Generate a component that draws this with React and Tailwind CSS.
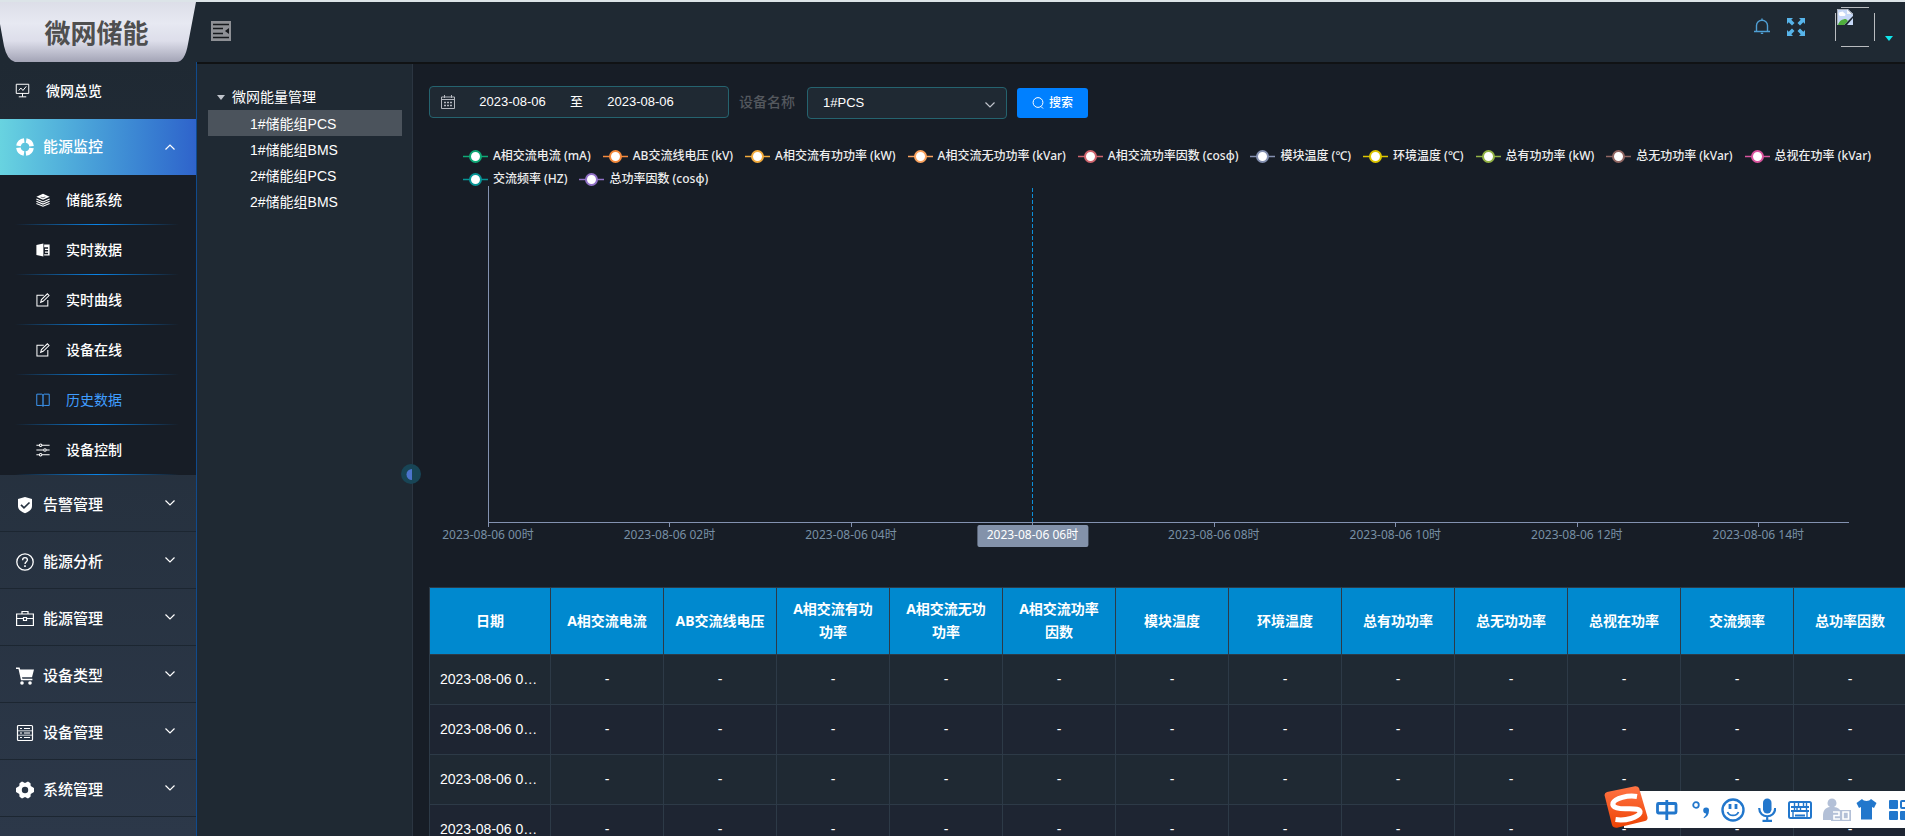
import React, { useState } from "react";

const subMenus = [
  { name: "储能系统", icon: "stack" },
  { name: "实时数据", icon: "book" },
  { name: "实时曲线", icon: "edit" },
  { name: "设备在线", icon: "edit" },
  { name: "历史数据", icon: "reading" },
  { name: "设备控制", icon: "operation" },
];

const menus = [
  { name: "告警管理", icon: "shield" },
  { name: "能源分析", icon: "question" },
  { name: "能源管理", icon: "suitcase" },
  { name: "设备类型", icon: "cart" },
  { name: "设备管理", icon: "server" },
  { name: "系统管理", icon: "gear" },
];

const devices = ["1#储能组PCS", "1#储能组BMS", "2#储能组PCS", "2#储能组BMS"];

const legends = [
  { name: "A相交流电流 (mA)", color: "#0fa876" },
  { name: "AB交流线电压 (kV)", color: "#f58a3c" },
  { name: "A相交流有功功率 (kW)", color: "#f3ab3d" },
  { name: "A相交流无功功率 (kVar)", color: "#fba35f" },
  { name: "A相交流功率因数 (cosφ)", color: "#d0656e" },
  { name: "模块温度 (℃)", color: "#8490b0" },
  { name: "环境温度 (℃)", color: "#dcc500" },
  { name: "总有功功率 (kW)", color: "#93b245" },
  { name: "总无功功率 (kVar)", color: "#916763" },
  { name: "总视在功率 (kVar)", color: "#d9559e" },
  { name: "交流频率 (HZ)", color: "#079496" },
  { name: "总功率因数 (cosφ)", color: "#9171c7" },
];

const hours = ["00", "02", "04", "06", "08", "10", "12", "14"];

const columns = [
  "A相交流电流",
  "AB交流线电压",
  "A相交流有功功率",
  "A相交流无功功率",
  "A相交流功率因数",
  "模块温度",
  "环境温度",
  "总有功功率",
  "总无功功率",
  "总视在功率",
  "交流频率",
  "总功率因数",
];

const rows = ["00时", "01时", "02时", "03时"];

const icons = {
  board: (
    <g fill="none" stroke="currentColor" strokeWidth="1.2">
      <path d="M1.5 1.5h15v11h-15zM9 12.5v4M4.5 16.6h9M4.5 9l2.500-3 2.500 3L13.500 4" />
    </g>
  ),
  help: (
    <g fill="none" stroke="currentColor" strokeWidth="4.6">
      <circle cx="9" cy="9" r="6.600" strokeDasharray="8.370 2" strokeDashoffset="-1" />
    </g>
  ),
  stack: (
    <g fill="none" stroke="currentColor" strokeWidth="1.4">
      <path d="M9 1l8.500 3.800L9 8.600 0.500 4.800z" fill="currentColor" stroke="none" />
      <path d="M0.500 7.800L9 11.500l8.500-3.700M0.500 10.600L9 14.200l8.500-3.600M0.500 13.400L9 17l8.500-3.600" />
      <path d="M6 5.200l3 1 3-1.200" stroke="#171d26" strokeWidth="0.8" />
    </g>
  ),
  book: (
    <g fill="currentColor">
      <path d="M0.500 2.500l9-2v17l-9-2z" />
      <path d="M10.500 2h7v14h-7v-1.500h5v-2h-4v-1.500h4V9h-4V7.500h4v-2h-5z" />
    </g>
  ),
  edit: (
    <g fill="none" stroke="currentColor" strokeWidth="1.3">
      <path d="M10 3H1.200v13.800h14V9" />
      <path d="M6 12l1-3.500L14.600 1l2.200 2.200-7.600 7.500z" />
    </g>
  ),
  reading: (
    <g fill="none" stroke="currentColor" strokeWidth="1.2">
      <path d="M1 1.500h6.500L9 2.800l1.500-1.300H17v14.500h-6.500L9 17l-1.500-1H1z" />
      <path d="M9 2.500V17" strokeWidth="2.600" strokeOpacity="0.600" />
    </g>
  ),
  operation: (
    <g fill="none" stroke="currentColor" strokeWidth="1.300">
      <path d="M0.500 3h4M7.500 3h10M0.500 9h9.500M13 9h4.500M0.500 15h4M7.500 15h10" />
      <circle cx="6" cy="3" r="1.600" />
      <circle cx="11.500" cy="9" r="1.600" />
      <circle cx="6" cy="15" r="1.600" />
    </g>
  ),
  shield: (
    <g>
      <path d="M9 1l7 2v7c0 3.500-3 5.700-7 7.200C5 15.700 2 13.500 2 10V3z" fill="currentColor" />
      <path d="M5 8.800l3 3 5.500-5.300" fill="none" stroke="#263240" strokeWidth="1.700" />
    </g>
  ),
  question: (
    <g fill="none" stroke="currentColor" strokeWidth="1.300">
      <circle cx="9" cy="9" r="8.200" />
      <path d="M6.600 7.200c0-1.500 1-2.500 2.400-2.500s2.400 1 2.400 2.300c0 1.700-2.400 1.800-2.400 4" />
      <path d="M9 12.300v1.600" strokeWidth="1.600" />
    </g>
  ),
  suitcase: (
    <g fill="none" stroke="currentColor" strokeWidth="1.200">
      <path d="M0.600 4h16.800v11.500H0.600zM6 4V1.500h6V4M0.600 8.500h7M10.500 8.500h7M7.500 7.500h3v3h-3z" />
    </g>
  ),
  cart: (
    <g fill="currentColor">
      <path d="M0 0.500h3.600l0.600 2H18l-2 7.800H6l0.400 1.500h10v1.500H5L2.500 2H0z" />
      <circle cx="6" cy="16" r="1.800" />
      <circle cx="14" cy="16" r="1.800" />
    </g>
  ),
  server: (
    <g fill="none" stroke="currentColor" strokeWidth="1.200">
      <rect x="1.500" y="1.500" width="15" height="15" rx="1" />
      <path d="M4 4.500h2M8 4.500h6M4 13.500h2M8 13.500h6" strokeWidth="1.200" />
      <path d="M2 6.800h14M2 11.200h14" strokeWidth="0.800" />
      <path d="M4 9h2M8 9h6" strokeWidth="1.400" strokeOpacity="0.700" />
    </g>
  ),
  gear: (
    <g>
      <path
        d="M6 0.500L9 2l3-1.500 2.500 1.700.2 2.800L18 7v4l-3.300 2-.2 2.800L12 17.500 9 16l-3 1.500-2.500-1.700L3.300 13 0 11V7l3.300-2 .2-2.800z"
        fill="currentColor"
      />
      <circle cx="9" cy="9" r="3.200" fill="#2a3645" />
    </g>
  ),
};

const Icon = ({ name, className }) => (
  <svg viewBox="0 0 18 18" className={className} aria-hidden="true">
    {icons[name]}
  </svg>
);

const Chevron = ({ up }) => (
  <svg viewBox="0 0 12 8" className="h-2 w-3" fill="none" stroke="currentColor" strokeWidth="1.200" aria-hidden="true">
    <path d={up ? "M1.500 6.500L6 2l4.500 4.500" : "M1.500 1.500L6 6l4.500-4.500"} />
  </svg>
);

const Sidebar = () => (
  <aside className="flex w-[197px] shrink-0 flex-col">
    <div className="relative flex h-[60px] shrink-0 items-center justify-center bg-[#1f2933] pr-2">
      <svg viewBox="0 0 196 60" preserveAspectRatio="none" className="absolute inset-y-0 left-0 h-full w-[196px]" aria-hidden="true">
        <defs>
          <linearGradient id="logoBg" x1="0" y1="0" x2="0" y2="1">
            <stop offset="0" stopColor="#dcdee8" />
            <stop offset="0.35" stopColor="#e7e9f2" />
            <stop offset="0.65" stopColor="#dddeea" />
            <stop offset="1" stopColor="#a3a4b6" />
          </linearGradient>
        </defs>
        <path d="M0 0H196L188 42Q185 60 176 60H15Q7 58 4 44L0 22Z" fill="url(#logoBg)" />
      </svg>
      <h1 className="relative mt-1 ml-1 text-[26px] leading-8 font-bold text-[#4f4f4f]">微网储能</h1>
    </div>
    <nav className="flex-1 border-r border-[#104a8c] bg-linear-to-b from-[#1f2933] to-[#2c3849] text-white">
      <a href="#overview" className="flex h-[57px] items-center gap-4 pl-[15px] text-sm font-medium">
        <Icon name="board" className="h-[15px] w-[15px]" />
        微网总览
      </a>
      <button type="button" className="flex h-14 w-full items-center bg-linear-to-r from-[#68d3e0] to-[#2f63cb] pr-5 pl-4 text-[15px] font-medium">
        <Icon name="help" className="h-[18px] w-[18px]" />
        <span className="ml-[9px] flex-1 text-left">能源监控</span>
        <Chevron up />
      </button>
      <ul className="bg-[#171d26]">
        {subMenus.map((item) => (
          <li key={item.name}>
            <a
              href={"#" + item.name}
              className={
                item.name === "历史数据"
                  ? "flex h-[49px] items-center gap-4 pl-9 text-sm text-[#409eff]"
                  : "flex h-[49px] items-center gap-4 pl-9 text-sm font-medium"
              }
            >
              <Icon name={item.icon} className="h-[14px] w-[14px]" />
              {item.name}
            </a>
            <div className="mr-[17px] ml-[15px] h-px bg-linear-to-r from-transparent via-[#0a84e8] to-transparent" />
          </li>
        ))}
      </ul>
      {menus.map((item) => (
        <button
          key={item.name}
          type="button"
          className="flex h-[57px] w-full items-center border-b border-[#1c2631] pt-1 pr-5 pl-4 text-[15px] font-medium"
        >
          <Icon name={item.icon} className="h-[18px] w-[18px]" />
          <span className="ml-[9px] flex-1 text-left">{item.name}</span>
          <span className="pb-1">
            <Chevron />
          </span>
        </button>
      ))}
    </nav>
  </aside>
);

const Header = () => (
  <header className="flex h-[62px] shrink-0 items-start justify-between border-b-2 border-[#101214] bg-[#1f2933] pl-[14px]">
    <button type="button" aria-label="收起菜单" className="mt-[19px]">
      <svg viewBox="0 0 20 20" className="h-5 w-5">
        <rect width="20" height="20" fill="#8e9095" />
        <path d="M2 3.500h16M2 7.500h10M2 12.500h10M2 16.500h16" stroke="#16191d" strokeWidth="1.300" />
        <path d="M18 7v6l-4-3z" fill="#16191d" />
      </svg>
    </button>
    <div className="flex items-start pr-3">
      <button type="button" aria-label="通知" className="mt-4 text-[#4f9fd4]">
        <svg viewBox="0 0 16 18" className="h-[18px] w-4" fill="none" stroke="currentColor" strokeWidth="1.400">
          <path d="M0 13.500h16M2.500 13.500V7.500C2.500 4.500 5 2.200 8 2.200s5.500 2.300 5.500 5.300v6M8 0.500v1.700M6.800 15.400h2.400" />
        </svg>
      </button>
      <button type="button" aria-label="全屏" className="mt-4 ml-[17px] text-[#57b4ea]">
        <svg viewBox="0 0 18 18" className="h-[18px] w-[18px]" fill="currentColor">
          <path d="M0 0h6L4.300 1.700 7.500 5 5 7.500 1.700 4.300 0 6z" />
          <path d="M18 0v6l-1.700-1.700L13 7.500 10.500 5l3.200-3.300L12 0z" />
          <path d="M0 18v-6l1.700 1.700L5 10.500 7.500 13l-3.200 3.300L6 18z" />
          <path d="M18 18h-6l1.700-1.700L10.500 13l2.500-2.500 3.300 3.200L18 12z" />
        </svg>
      </button>
      {/* avatar without a picture */}
      <svg viewBox="0 0 40 40" className="mt-[5px] ml-[30px] h-10 w-10" role="img" aria-label="头像">
        <path d="M6 0.500h28M6 39.500h28M0.500 6v28M39.500 6v28" stroke="#b9bcc0" />
        <path d="M2 2h11l5 5v2L9 18H2z" fill="#c6d8f7" />
        <path d="M12 2l6 5h-6z" fill="#f4f6fa" />
        <path d="M4 8a2 2 0 012-3 2 2 0 013 1 1.500 1.500 0 010 3H5z" fill="#fff" />
        <path d="M3 18c1-4 4-6 8-6l2 2-4 4z" fill="#4fae3c" />
        <path d="M2.500 18V2.500h10l5 5" fill="none" stroke="#aab0bb" />
        <path d="M18 11v7h-6z" fill="#c6d8f7" />
      </svg>
      <svg viewBox="0 0 8 5" className="mt-[34px] ml-[10px] h-[5px] w-2" aria-hidden="true">
        <path d="M0 0h8L4 5z" fill="#0fe6ec" />
      </svg>
    </div>
  </header>
);

const DeviceTree = () => {
  const [current, setCurrent] = useState(devices[0]);

  return (
    <section className="relative w-[216px] shrink-0 border-r border-[#2b3541] bg-[#1f2933] pt-5 pr-[10px] pl-[11px] text-sm text-white">
      <button type="button" className="flex h-[26px] w-full items-center gap-[7px] pl-[9px]">
        <svg viewBox="0 0 8 5" className="h-[5px] w-2" aria-hidden="true">
          <path d="M0 0h8L4 5z" fill="#c0c4cc" />
        </svg>
        微网能量管理
      </button>
      <ul>
        {devices.map((item) => (
          <li key={item}>
            <button
              type="button"
              onClick={() => setCurrent(item)}
              className={
                current === item
                  ? "flex h-[26px] w-full items-center bg-[#4b535c] pt-[2px] pl-[42px]"
                  : "flex h-[26px] w-full items-center pt-[2px] pl-[42px]"
              }
            >
              {item}
            </button>
          </li>
        ))}
      </ul>
      <button type="button" aria-label="折叠" className="absolute top-[400px] -right-[9px] z-10 flex h-5 w-5 items-center justify-center rounded-full bg-[#184556]">
        <svg viewBox="0 0 6 11" className="mr-1 h-[11px] w-[6px]">
          <path d="M6 0v11A5.500 5.500 0 016 0z" fill="#4c74cc" />
        </svg>
      </button>
    </section>
  );
};

const SearchBar = () => (
  <form className="flex h-[33px] items-start text-[13px] text-white" onSubmit={(e) => e.preventDefault()}>
    <div className="flex h-8 w-[300px] items-center rounded border border-[#25636f] bg-[#1f2933] pl-[11px]">
      <svg viewBox="0 0 14 14" className="h-[14px] w-[14px]" fill="none" stroke="#b4b8bf" aria-hidden="true">
        <path d="M0.500 2h13v11.500H0.500zM0.500 4.500h13M3.500 0v3M10.500 0v3" />
        <path d="M3 7.500h2M6 7.500h2M9 7.500h2M3 10.500h2M6 10.500h2M9 10.500h2" strokeWidth="1.400" />
      </svg>
      <input aria-label="开始日期" defaultValue="2023-08-06" className="w-[115px] bg-transparent text-center outline-none" />
      <span className="w-[13px] text-center">至</span>
      <input aria-label="结束日期" defaultValue="2023-08-06" className="w-[115px] bg-transparent text-center outline-none" />
    </div>
    <label htmlFor="device" className="mr-3 ml-[10px] text-sm leading-8 font-medium text-[#54585e]">
      设备名称
    </label>
    <div className="relative mt-px w-[200px]">
      <select id="device" className="h-8 w-full appearance-none rounded border border-[#25636f] bg-[#1f2933] pl-[15px] outline-none">
        <option>1#PCS</option>
        <option>2#PCS</option>
      </select>
      <span className="pointer-events-none absolute top-[14px] right-[11px] text-[#c0c4cc]">
        <Chevron />
      </span>
    </div>
    <button type="submit" className="mt-[2px] ml-[10px] flex h-[30px] items-center gap-[5px] rounded-[3px] bg-[#0080ff] px-[15px] text-xs font-medium">
      <svg viewBox="0 0 12 12" className="h-3 w-3" fill="none" stroke="currentColor" aria-hidden="true">
        <circle cx="6" cy="5.500" r="4.900" />
        <path d="M9 9.500l2 2" />
      </svg>
      搜索
    </button>
  </form>
);

const HistoryChart = () => (
  <div className="mt-[30px]">
    <ul className="ml-[34px] flex flex-wrap gap-x-3 gap-y-[9px] font-['Noto_Sans','Noto_Sans_CJK_SC',sans-serif] text-xs leading-[14px] font-medium text-[#eeeeee]">
      {legends.map((item) => (
        <li key={item.name} className="flex items-center gap-[5px] whitespace-nowrap">
          <svg viewBox="0 0 25 14" className="h-[14px] w-[25px]" aria-hidden="true">
            <path d="M0 7.500h25" stroke={item.color} strokeWidth="1.500" />
            <circle cx="12.500" cy="7.500" r="5.500" fill="#fff" stroke={item.color} strokeWidth="2" />
          </svg>
          {item.name}
        </li>
      ))}
    </ul>
    <div className="mr-14 ml-[59px]">
      <svg className="h-[360px] w-full overflow-visible font-['Noto_Sans','Noto_Sans_CJK_SC',sans-serif] text-xs">
        <g stroke="#8392b0" shapeRendering="crispEdges">
          <line x1="0.5" x2="0.5" y1="0" y2="341" />
          <line x1="0" x2="100%" y1="336.5" y2="336.5" />
        </g>
        {hours.map((hour, i) => (
          <svg key={hour} x={`${(i * 100) / 7.5}%`} className="overflow-visible">
            <line x1="0.5" x2="0.5" y1="337" y2="341" stroke="#8392b0" shapeRendering="crispEdges" />
            {hour === "06" && (
              <>
                <line x1="0.5" x2="0.5" y1="2" y2="336" stroke="#0d8fd8" strokeDasharray="4 2" shapeRendering="crispEdges" />
                <rect x="-55" y="339" width="111" height="22" rx="2" fill="#8392aa" />
              </>
            )}
            <text x="0" y="353" textAnchor="middle" fill={hour === "06" ? "#ffffff" : "#7890a5"}>
              2023-08-06 {hour}时
            </text>
          </svg>
        ))}
      </svg>
    </div>
  </div>
);

const HistoryTable = () => (
  <div className="mt-[41px] overflow-hidden">
    <table className="w-[1478px] table-fixed border-collapse text-sm text-white">
      <thead>
        <tr className="h-[67px] bg-[#0089cf] font-['Noto_Sans','Noto_Sans_CJK_SC',sans-serif] leading-[23px]">
          <th className="w-[121px] border border-[#2d3a47] px-[10px] pb-[2px] font-bold">日期</th>
          {columns.map((col) => (
            <th key={col} className="w-[113px] border border-[#2d3a47] px-[10px] pb-[2px] font-bold">
              {col}
            </th>
          ))}
        </tr>
      </thead>
      <tbody>
        {rows.map((time) => (
          <tr key={time} className="h-[50px] odd:bg-[#1f2933] even:bg-[#1e2532]">
            <td className="truncate border border-[#2d3a47] px-[10px] pb-[2px]">2023-08-06 {time}</td>
            {columns.map((col) => (
              <td key={col} className="border border-[#2d3a47] pb-[2px] text-center">
                -
              </td>
            ))}
          </tr>
        ))}
      </tbody>
    </table>
  </div>
);

// floating bar of the input method
const ImeBar = () => (
  <div className="absolute right-0 bottom-2 flex h-[41px] items-end">
    <svg viewBox="0 0 44 42" className="relative z-10 -mr-11 h-[42px] w-11" role="img" aria-label="输入法">
      <defs>
        <linearGradient id="imeLogo" x1="0" y1="0" x2="0" y2="1">
          <stop offset="0" stopColor="#ff7444" />
          <stop offset="1" stopColor="#ee4304" />
        </linearGradient>
      </defs>
      <path d="M3 6L31 0.300Q34 0 35 2L43.500 31Q44 34 41 35L13 41.700Q9 42 8 39L0.500 9Q0.500 7 3 6z" fill="url(#imeLogo)" />
      <path d="M33 10.500C24 9 11 12 9 17c-1.500 5 7 6 14 5.800 8-.2 14 .2 13 4C34 31.500 22 35 11.500 33.500" fill="none" stroke="#fff" strokeWidth="5" />
    </svg>
    <div className="ml-5 flex h-[37px] items-center bg-white pl-8 text-[#2277cc]">
      <svg viewBox="0 0 22 22" className="h-[22px] w-[22px]" fill="none" stroke="currentColor" strokeWidth="2.800">
        <rect x="1.500" y="4.500" width="18.500" height="9.500" rx="1" />
        <path d="M10.800 1v20" />
      </svg>
      <svg viewBox="0 0 18 18" className="ml-[14px] h-[18px] w-[18px]" fill="none" stroke="currentColor" strokeWidth="1.800">
        <circle cx="4" cy="4" r="2.800" />
        <path d="M14.300 6.500a2.800 2.800 0 012.700 3c0 4-2 6.500-5 7.800l-.4-1c1.500-1 2.400-2 2.500-3.700-1.700 0-2.900-1.200-2.900-3a3 3 0 013.100-3.100z" fill="currentColor" stroke="none" />
      </svg>
      <svg viewBox="0 0 24 24" className="ml-[11px] h-6 w-6" fill="none" stroke="currentColor" strokeWidth="2.400">
        <circle cx="12" cy="12" r="10.500" />
        <path d="M9 6v5M15 6v5" strokeWidth="2.800" />
        <path d="M6.500 14c2 4.500 9 4.500 11 0" strokeWidth="1.800" />
      </svg>
      <svg viewBox="0 0 18 24" className="ml-[13px] h-6 w-[18px]" fill="none" stroke="currentColor" strokeWidth="2.200">
        <rect x="5" y="0.500" width="8.500" height="15" rx="4.200" fill="currentColor" stroke="none" />
        <path d="M1.200 10c0 11 16 11 16 0M9.200 18v4M4.500 22.800h9.500" />
      </svg>
      <svg viewBox="0 0 24 18" className="ml-3 h-[18px] w-6" fill="none" stroke="currentColor" strokeWidth="2">
        <rect x="1" y="1" width="22" height="16" rx="1.500" />
        <path d="M3 6h18M3 10h18M7 14.500h10" strokeWidth="1.800" />
        <path d="M6.500 2v8M10.500 2v4M12.500 6v5M15.500 2v4M18.500 2v9M5 11v5M19 11v5M9 6v5" strokeWidth="1.400" />
      </svg>
      <svg viewBox="0 0 28 23" className="ml-[11px] h-[23px] w-7" fill="none">
        <path d="M9 0.500a4.500 4.500 0 012 8.500c4 .5 6 2 6 4H8v9H0v-4c0-5 2-8.500 7-9a4.500 4.500 0 012-8.500z" fill="#b3c0d7" />
        <path d="M8 12h20v11H8z" fill="#b3c0d7" />
        <path d="M10 14h6v3.500h-5v3.500H17M20 14h5.500v7H20z" stroke="#fff" strokeWidth="1.600" />
      </svg>
      <svg viewBox="0 0 21 21" className="ml-[5px] h-[21px] w-[21px]" fill="currentColor">
        <path d="M6 0c1.500 2.500 7.500 2.500 9 0l5.500 4-2.500 5-2-1v12.500H5V8L3 9 0.500 4z" />
      </svg>
      <svg viewBox="0 0 16 20" className="ml-3 h-5 w-4" fill="currentColor">
        <rect y="0" width="9" height="9" rx="1" />
        <rect y="11" width="9" height="9" rx="1" />
        <rect x="12" y="1" width="8" height="7" rx="1" fill="none" stroke="currentColor" strokeWidth="2" />
        <rect x="11" y="11" width="9" height="9" rx="1" />
      </svg>
    </div>
  </div>
);

const App = () => {
  return (
    <div className="relative flex h-screen overflow-hidden border-t-2 border-[#dce4e8] bg-[#171d26] font-['Liberation_Sans','Noto_Sans_CJK_SC',sans-serif]">
      <Sidebar />
      <div className="flex min-w-0 flex-1 flex-col">
        <Header />
        <div className="flex min-h-0 flex-1">
          <DeviceTree />
          <main className="min-w-0 flex-1 overflow-hidden pt-[22px] pl-4">
            <SearchBar />
            <HistoryChart />
            <HistoryTable />
          </main>
        </div>
      </div>
      <ImeBar />
    </div>
  );
};

export default App;
